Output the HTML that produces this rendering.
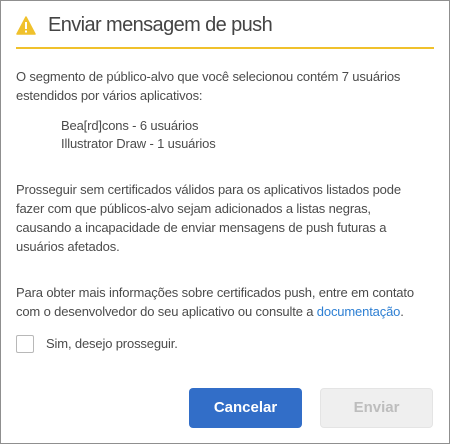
<!DOCTYPE html>
<html><head><meta charset="utf-8"><style>
html,body{margin:0;padding:0;}
body{width:450px;height:444px;background:#fff;position:relative;overflow:hidden;font-family:"Liberation Sans",sans-serif;color:#4b4b4b;}
.frame{position:absolute;left:0;top:0;width:448px;height:442px;border:1px solid #8f8f8f;}
.t{position:absolute;white-space:nowrap;font-size:13px;letter-spacing:-0.15px;line-height:19px;}
h1{position:absolute;left:48px;top:14px;margin:0;font-weight:normal;font-size:20px;color:#444;letter-spacing:-0.6px;white-space:nowrap;}
.rule{position:absolute;left:16px;top:47px;width:418px;height:2px;background:#f0c12c;}
a{color:#2d7fd3;text-decoration:none;}
.cb{position:absolute;left:16px;top:335px;width:16px;height:16px;border:1px solid #b8b8b8;border-radius:2px;background:#fff;}
.btn{position:absolute;top:388px;width:113px;height:40px;border-radius:4px;font-size:15px;font-weight:bold;text-align:center;line-height:40px;}
</style></head><body>
<div class="frame"></div>
<svg style="position:absolute;left:16px;top:16px" width="20" height="19" viewBox="0 0 20 19"><path d="M10 1 L19 18 L1 18 Z" fill="#f0c12c" stroke="#f0c12c" stroke-linejoin="round" stroke-width="1.5"/><rect x="9" y="6" width="2" height="7" fill="#fff"/><rect x="9" y="14.5" width="2" height="2" fill="#fff"/></svg>
<h1>Enviar mensagem de push</h1>
<div class="rule"></div>
<div class="t" style="left:16px;top:67px">O segmento de público-alvo que você selecionou contém 7 usuários<br>estendidos por vários aplicativos:</div>
<div class="t" style="left:61px;top:117px;line-height:18px">Bea[rd]cons - 6 usuários<br>Illustrator Draw - 1 usuários</div>
<div class="t" style="left:16px;top:180px">Prosseguir sem certificados válidos para os aplicativos listados pode<br>fazer com que públicos-alvo sejam adicionados a listas negras,<br>causando a incapacidade de enviar mensagens de push futuras a<br>usuários afetados.</div>
<div class="t" style="left:16px;top:283px">Para obter mais informações sobre certificados push, entre em contato<br>com o desenvolvedor do seu aplicativo ou consulte a <a>documentação</a>.</div>
<div class="cb"></div>
<div class="t" style="left:46px;top:334px">Sim, desejo prosseguir.</div>
<div class="btn" style="left:189px;background:#326ec8;color:#fff">Cancelar</div>
<div class="btn" style="left:320px;background:#efefef;border:1px solid #e4e4e4;width:111px;height:38px;line-height:38px;color:#bdbdbd">Enviar</div>
</body></html>
